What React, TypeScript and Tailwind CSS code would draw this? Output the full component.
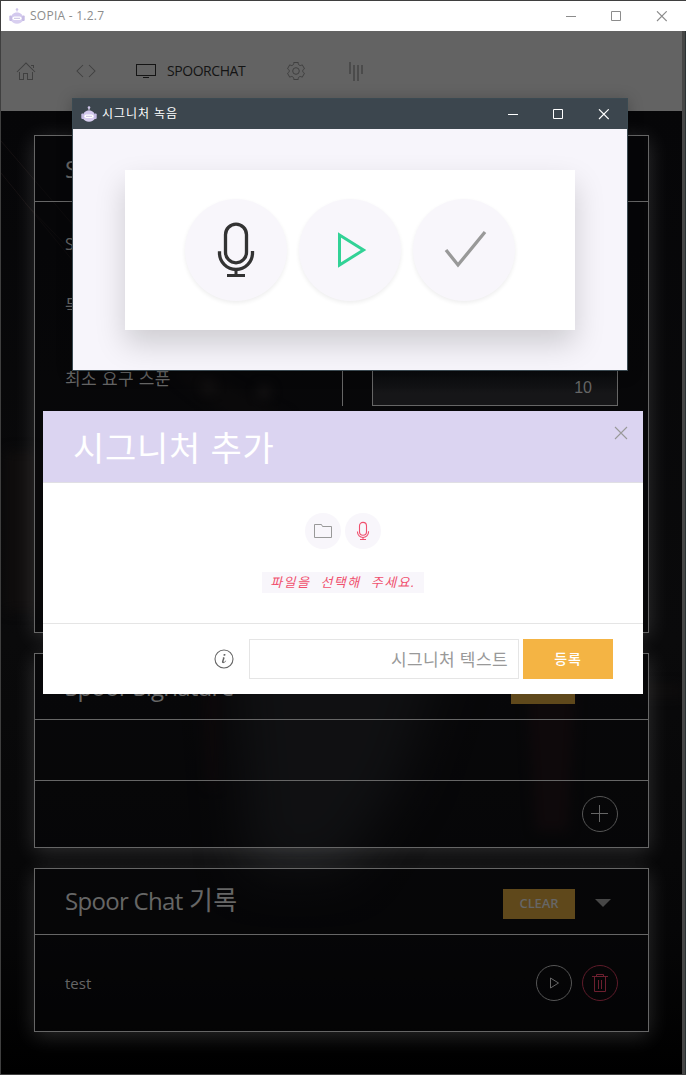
import React from "react";

type IconProps = { size?: number; className?: string; children: React.ReactNode };

function Icon({ size = 20, className = "", children }: IconProps) {
  return (
    <svg width={size} height={size} viewBox="0 0 20 20" className={`block shrink-0 ${className}`} fill="none" stroke="currentColor">
      {children}
    </svg>
  );
}

const HomeIcon = () => (
  <Icon>
    <g fill="currentColor" stroke="none">
      <polygon points="18.65 11.35 10 2.71 1.35 11.35 0.65 10.65 10 1.29 19.35 10.65" />
      <polygon points="15 4 18 4 18 7 17 7 17 5 15 5" />
      <polygon points="3 11 4 11 4 18 7 18 7 12 12 12 12 18 16 18 16 11 17 11 17 19 11 19 11 13 8 13 8 19 3 19" />
    </g>
  </Icon>
);
const CodeIcon = () => (
  <Icon>
    <polyline strokeWidth="1.01" points="13,4 19,10 13,16" />
    <polyline strokeWidth="1.01" points="7,4 1,10 7,16" />
  </Icon>
);
const TvIcon = () => (
  <Icon>
    <rect x="7" y="16" width="6" height="1" fill="currentColor" stroke="none" />
    <rect x="0.5" y="3.5" width="19" height="11" />
  </Icon>
);
const CogIcon = () => (
  <Icon>
    <circle cx="9.997" cy="10" r="3.31" />
    <path d="M18.488,12.285 L16.205,16.237 C15.322,15.496 14.185,15.281 13.303,15.791 C12.428,16.289 12.047,17.373 12.246,18.5 L7.735,18.5 C7.938,17.374 7.553,16.299 6.684,15.791 C5.801,15.27 4.655,15.492 3.773,16.237 L1.5,12.285 C2.573,11.871 3.317,10.999 3.317,9.991 C3.305,8.98 2.573,8.121 1.5,7.716 L3.765,3.784 C4.645,4.516 5.794,4.738 6.687,4.232 C7.555,3.722 7.939,2.637 7.735,1.5 L12.263,1.5 C12.072,2.637 12.441,3.71 13.314,4.22 C14.206,4.73 15.343,4.516 16.225,3.794 L18.487,7.714 C17.404,8.117 16.661,8.988 16.67,10.009 C16.672,11.018 17.415,11.88 18.488,12.285 Z" />
  </Icon>
);
const BarsIcon = () => (
  <Icon>
    <g fill="#4b4b4b" stroke="none">
      <rect x="3" y="1" width="2" height="12" />
      <rect x="7" y="4" width="2" height="16" />
      <rect x="11" y="4" width="2" height="16" />
      <rect x="15" y="4" width="2" height="9" />
    </g>
  </Icon>
);
const MicIcon = ({ size, className }: { size?: number; className?: string }) => (
  <Icon size={size} className={className}>
    <line x1="10" x2="10" y1="16.44" y2="18.5" />
    <line x1="7" x2="13" y1="18.5" y2="18.5" />
    <path strokeWidth="1.1" d="M13.5 4.89v5.87a3.5 3.5 0 0 1-7 0V4.89a3.5 3.5 0 0 1 7 0z" />
    <path strokeWidth="1.1" d="M15.5 10.36V11a5.5 5.5 0 0 1-11 0v-.6" />
  </Icon>
);
const PlayIcon = ({ size, className }: { size?: number; className?: string }) => (
  <Icon size={size} className={className}>
    <polygon points="6.5,5 14.5,10 6.5,15" />
  </Icon>
);

function Robot() {
  return (
    <svg width="16" height="16" viewBox="0 0 16 16" className="block shrink-0">
      <circle cx="8" cy="1.6" r="1.3" fill="#cfc6ea" />
      <rect x="7.5" y="2.5" width="1" height="2" fill="#e3dcf5" />
      <path d="M2.500 9C2.500 6 5 4.500 8 4.500s5.500 1.500 5.500 4.500z" fill="#d3c9ee" />
      <path d="M2 9h12v3.500c-1 2-3.200 3.200-6 3.200s-5-1.200-6-3.200z" fill="#d8cff0" />
      <rect x="0.300" y="7.500" width="2.700" height="5.500" rx="1" fill="#c6bce4" />
      <rect x="13" y="7.500" width="2.700" height="5.500" rx="1" fill="#c6bce4" />
      <rect x="3.500" y="8.500" width="9" height="3.500" rx="1.750" fill="#fff" />
      <path d="M5 10.300h6" stroke="#c9c0e2" />
    </svg>
  );
}

function WindowButtons() {
  return (
    <svg width="101" height="11" viewBox="0 0 101 11" className="block shrink-0" fill="none" stroke="currentColor">
      <path d="M0 5.500h10M45.500 0.500h9v9h-9z" />
      <path strokeWidth="1.150" d="M91 0.300l9.700 9.700M100.700 0.300l-9.700 9.700" />
    </svg>
  );
}

function Backdrop() {
  return (
    <svg className="absolute inset-0" width="681" height="963" viewBox="0 0 681 963" preserveAspectRatio="none">
      <defs>
        <linearGradient id="base" x1="0" y1="0" x2="0" y2="1">
          <stop offset="0" stopColor="#060608" />
          <stop offset="0.550" stopColor="#0a0a0b" />
          <stop offset="0.850" stopColor="#060607" />
          <stop offset="1" stopColor="#000" />
        </linearGradient>
        <filter id="soft" x="-50%" y="-50%" width="200%" height="200%" colorInterpolationFilters="sRGB">
          <feGaussianBlur stdDeviation="24" />
        </filter>
        <filter id="softer" x="-50%" y="-50%" width="200%" height="200%" colorInterpolationFilters="sRGB">
          <feGaussianBlur stdDeviation="6" />
        </filter>
      </defs>
      <rect width="681" height="963" fill="url(#base)" />
      <path d="M230 520h220l-50 150l-60 90h-90z" fill="#1a1b1d" filter="url(#soft)" />
      <path d="M525 560h50l-8 160h-32z" fill="#170c0e" filter="url(#softer)" />
      <path d="M202 575h16v100h-12z" fill="#120a0c" filter="url(#softer)" />
      <g filter="url(#softer)" fill="#0f0d0d">
        <rect x="4" y="340" width="34" height="160" />
        <rect x="640" y="575" width="41" height="10" />
        <path d="M170 262l30-4l90 50h-60z" />
      </g>
      <path d="M0 30L72 114M0 62L72 150M24 92L80 150" stroke="#151112" />
      <g fill="#2b2624" filter="url(#softer)">
        <circle cx="263" cy="281" r="6" />
        <circle cx="208" cy="276" r="5" />
      </g>
    </svg>
  );
}

const card = "border border-[#666] bg-[#050508]/50 shadow-[0_4px_20px_rgba(255,255,255,0.16)]";

function Roundel({ className, children }: { className: string; children: React.ReactNode }) {
  return <span className={`flex size-9 items-center justify-center rounded-full border ${className}`}>{children}</span>;
}

function MainWindow() {
  return (
    <div className="flex h-full flex-col border-l border-t border-b border-[#3f3f3f]">
      <header className="flex h-[30px] shrink-0 items-center bg-white pl-2 pr-[19px] text-[#8c8c8c]">
        <Robot />
        <span className="ml-[5px] text-[12px] tracking-[0.25px]">SOPIA - 1.2.7</span>
        <span className="ml-auto"><WindowButtons /></span>
      </header>
      <div className="flex min-h-0 grow">
        <div className="flex w-[681px] flex-col">
          <nav className="flex h-20 shrink-0 items-center bg-[#636363] pl-[15px] text-[#404040]">
            <HomeIcon />
            <span className="ml-10"><CodeIcon /></span>
            <span className="ml-10 flex items-center gap-[11px] text-[#141414]">
              <TvIcon />
              <span className="pb-px text-[14px] tracking-[-0.45px]">SPOORCHAT</span>
            </span>
            <span className="ml-[41px]"><CogIcon /></span>
            <span className="ml-10"><BarsIcon /></span>
          </nav>
          <main className="relative flex min-h-0 grow flex-col text-[#666]">
            <Backdrop />
            <div className="relative flex flex-col gap-5 px-[33px] pt-6">
              <section className={`${card} h-[498px]`}>
                <h3 className="flex h-[66px] items-center border-b border-[#666] px-[30px] text-[24px] font-medium">Spoor Setting</h3>
                <div className="flex flex-col px-[30px] pt-[11px] text-[16px]">
                  <div className="flex h-[62px] items-center">Sticker</div>
                  <div className="flex h-[62px] items-center text-[17px]">목소리</div>
                  <div className="flex h-[66px] items-center pt-[14px]">
                    <span className="w-[277px] pt-[3px] text-[17px] tracking-[0.4px]">최소 요구 스푼</span>
                    <span className="h-[57px] w-[30px] border-l border-[#666]" />
                    <span className="flex h-[57px] w-[246px] items-end justify-end border border-[#666] bg-gradient-to-b from-[#0a0b0d] from-40% to-[#161618] to-80% px-[25px] pb-[5px] font-['Liberation_Sans']">10</span>
                  </div>
                </div>
              </section>
              <section className={`${card} h-[195px]`}>
                <div className="flex h-[66px] items-center border-b border-[#666] pl-[30px] pr-[73px]">
                  <h3 className="text-[24px] font-medium tracking-[-0.750px]">Spoor Signature</h3>
                  <span className="ml-auto h-[34px] w-16 bg-[#5f481b]" />
                </div>
                <div className="h-[61px] border-b border-[#666]" />
                <div className="flex h-[66px] items-center justify-end pr-[30px]">
                  <Roundel className="border-[#555]">
                    <Icon><path d="M9.500 1v17M1 9.500h17" /></Icon>
                  </Roundel>
                </div>
              </section>
              <section className={`${card} h-[164px]`}>
                <div className="flex h-[66px] items-center border-b border-[#666] pl-[30px] pr-[37px]">
                  <h3 className="mb-[2px] whitespace-pre text-[24px] font-medium tracking-[-0.7px]">Spoor Chat <span className="ml-px text-[26px] font-normal tracking-[0.4px]">기록</span></h3>
                  <span className="ml-auto mt-[5px] flex h-[30px] w-[72px] items-center justify-center bg-[#5f481b] text-[13px] font-semibold tracking-[-0.1px]">CLEAR</span>
                  <svg width="16" height="8" viewBox="0 0 16 8" className="ml-5 mt-[3px]"><path d="M0 0h16l-8 8z" fill="#474747" /></svg>
                </div>
                <div className="flex h-[96px] items-center gap-[10px] px-[30px] text-[15px]">
                  <span className="mr-auto pt-px font-medium">test</span>
                  <Roundel className="border-[#555]"><PlayIcon /></Roundel>
                  <Roundel className="border-[#5d1b29] text-[#6c1f2f]">
                    <Icon>
                      <polyline points="6.5 3 6.5 1.5 13.5 1.5 13.5 3" />
                      <polyline points="4.5 4 4.5 18.5 15.5 18.5 15.5 4" />
                      <path d="M8.500 7v9M11.500 7v9M2 3.500h16" />
                    </Icon>
                  </Roundel>
                </div>
              </section>
            </div>
          </main>
        </div>
        <div className="w-[3px] bg-[#464646]" />
        <div className="w-px bg-[#2b3334]" />
      </div>
    </div>
  );
}

function RecordButton({ children }: { children: React.ReactNode }) {
  return <button className="flex size-[102px] items-center justify-center rounded-full bg-[#f8f6fb] shadow-[0_2px_4px_rgba(0,0,0,0.07)]">{children}</button>;
}

function RecorderWindow() {
  return (
    <div className="absolute left-[72px] top-[98px] flex h-[273px] w-[556px] flex-col border border-[#3b4a52] bg-[#f7f5fb] shadow-[0_2px_14px_rgba(0,0,0,0.25)]">
      <header className="flex h-[30px] shrink-0 items-center bg-[#3c464e] pl-2 pr-[18px] text-white">
        <Robot />
        <span className="ml-[5px] text-[12px] tracking-[0.95px]">시그니처 녹음</span>
        <span className="ml-auto"><WindowButtons /></span>
      </header>
      <div className="flex grow items-start justify-center overflow-hidden pt-[41px]">
        <div className="mr-[1px] flex h-40 w-[450px] items-center justify-center gap-3 bg-white shadow-[0_14px_28px_rgba(0,0,0,0.17)]">
          <RecordButton><MicIcon size={60} className="text-[#333]" /></RecordButton>
          <RecordButton><PlayIcon size={60} className="text-[#32d296]" /></RecordButton>
          <RecordButton>
            <Icon size={60} className="text-[#999]"><polyline strokeWidth="1.1" points="4,10 8,15 17,4" /></Icon>
          </RecordButton>
        </div>
      </div>
    </div>
  );
}

function AddDialog() {
  return (
    <div className="absolute left-[43px] top-[411px] flex h-[283px] w-[600px] flex-col bg-white">
      <header className="flex h-[72px] items-center border-b border-[#e0dfe4] bg-[#dbd4f1] pl-[30px] pr-[15px] text-white">
        <h2 className="pt-[3px] text-[34px] tracking-[0.7px]">시그니처 추가</h2>
        <svg width="14" height="14" viewBox="0 0 14 14" className="mb-7 ml-auto text-[#999]" stroke="currentColor" strokeWidth="1.1">
          <path d="M1 1l12 12M13 1L1 13" />
        </svg>
      </header>
      <div className="flex h-[140px] flex-col items-center pt-[30px]">
        <div className="flex gap-1">
          <button className="flex size-9 items-center justify-center rounded-full bg-[#f8f6fb] text-[#999]">
            <Icon><polygon points="9.5 5.5 8.5 3.5 1.5 3.5 1.5 16.5 18.5 16.5 18.5 5.5" /></Icon>
          </button>
          <button className="flex size-9 items-center justify-center rounded-full bg-[#f8f6fb] text-[#f0506e]"><MicIcon /></button>
        </div>
        <span className="mt-[23px] flex h-[21px] w-[162px] items-center justify-center whitespace-nowrap bg-[#f8f6fb] text-[13px] italic tracking-[1.5px] [word-spacing:5px] text-[#f0506e]">파일을 선택해 주세요.</span>
      </div>
      <footer className="flex grow items-center border-t border-[#e5e5e5] pl-[171px] pr-[30px]">
        <Icon className="text-[#666]">
          <path fill="currentColor" stroke="none" d="M12.13,11.59 C11.97,12.84 10.35,14.12 9.1,14.16 C6.17,14.2 9.89,9.46 8.74,8.37 C9.3,8.16 10.62,7.83 10.62,8.81 C10.62,9.63 10.12,10.55 9.88,11.32 C8.66,15.16 12.13,11.15 12.14,11.18 C12.16,11.21 12.16,11.35 12.13,11.59 Z M11.56,5.67 C11.56,6.67 9.36,7.15 9.36,6.03 C9.36,5 11.56,4.54 11.56,5.67 Z" />
          <circle strokeWidth="1.1" cx="10" cy="10" r="9" />
        </Icon>
        <span className="ml-[15px] flex h-10 w-[270px] items-center justify-end border border-[#e5e5e5] pr-[10px] pt-[2px] text-[17px] tracking-[0.4px] text-[#999]">시그니처 텍스트</span>
        <button className="ml-1 h-10 w-[90px] bg-[#f4b444] pb-[2px] text-[14px] font-medium tracking-[0.8px] text-white">등록</button>
      </footer>
    </div>
  );
}

export default function App() {
  return (
    <div className="relative h-[1075px] w-[686px] overflow-hidden bg-black font-['Open_Sans','Noto_Sans_CJK_KR',sans-serif]">
      <MainWindow />
      <RecorderWindow />
      <AddDialog />
    </div>
  );
}
